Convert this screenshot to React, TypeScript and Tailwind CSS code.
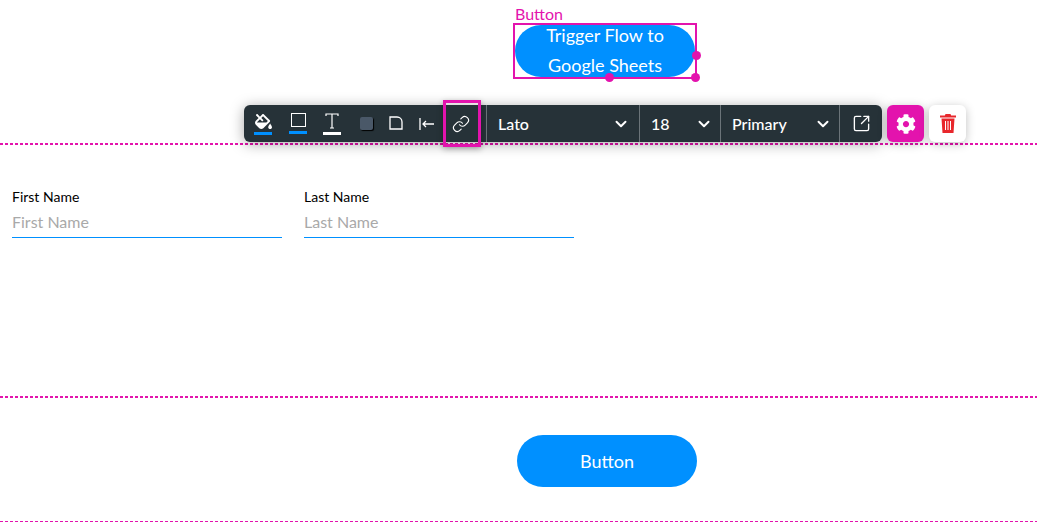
import { useState } from "react";
import { ChevronDown, Link as LinkIcon, SquareArrowOutUpRight } from "lucide-react";
import { FaCog, FaFillDrip } from "react-icons/fa";

function Dashed({ thick }: { thick?: boolean }) {
  return (
    <div
      className={
        thick
          ? "h-[2px] bg-[repeating-linear-gradient(90deg,#e313ad_0_3px,transparent_3px_5px)]"
          : "h-px bg-[repeating-linear-gradient(90deg,#e313ad_0_3px,transparent_3px_5px)]"
      }
    />
  );
}

function Field({ label }: { label: string }) {
  const [value, setValue] = useState("");
  return (
    <label className="block w-[270px]">
      <span className="block text-[14px] leading-[16px] text-black">{label}</span>
      <input
        value={value}
        onChange={(e) => setValue(e.target.value)}
        placeholder={label}
        className="mt-[7px] block h-[26px] w-full border-b border-[#0090ff] pb-[7px] text-[16px] outline-none placeholder:text-[#a9a9a9]"
      />
    </label>
  );
}

function Select({ label, width, textWidth }: { label: string; width: string; textWidth: string }) {
  return (
    <div className={`flex h-full items-center border-l border-[#6b7479] pl-[11px] ${width}`}>
      <span className={`text-[16px] font-medium text-white ${textWidth}`}>{label}</span>
      <ChevronDown className="h-[18px] w-[18px] text-white" strokeWidth={2.6} />
    </div>
  );
}

function Toolbar() {
  return (
    <div className="absolute left-[244px] top-[105px] flex h-[37px] items-center gap-[5px]">
      <div className="flex h-full w-[638px] items-center rounded-[6px] bg-[#263238] shadow-[0_2px_14px_rgba(0,0,0,0.35)]">
        <div className="flex h-full w-[242px] items-center pl-[2px]">
          <div className="flex w-[34px] flex-col items-center">
            <FaFillDrip className="h-[17px] w-[17px] text-white" />
            <div className="mt-[2px] h-[3px] w-[18px] bg-[#0090ff]" />
          </div>
          <div className="ml-px flex w-[34px] flex-col items-center">
            <div className="h-[14px] w-[15px] border border-white" />
            <div className="mt-[4px] h-[3px] w-[18px] bg-[#0090ff]" />
          </div>
          <div className="flex w-[34px] flex-col items-center">
            <svg viewBox="0 0 14 16" className="h-[16px] w-[14px]" fill="none" stroke="white" strokeWidth="1.2">
              <path d="M1 3V1h12v2M7 1v14M5 15h4" />
            </svg>
            <div className="mt-[3px] h-[3px] w-[18px] bg-white" />
          </div>
          <div className="ml-[2px] flex w-[30px] justify-center">
            <div className="h-[13px] w-[13px] rounded-[2px] bg-[#4a5868] shadow-[1px_1px_1px_#000]" />
          </div>
          <div className="flex w-[30px] justify-center pb-[2px]">
            <svg viewBox="0 0 14 14" className="h-[14px] w-[14px]" fill="none" stroke="white" strokeWidth="1.3">
              <path d="M1 1h7c2.800 0 5 2.200 5 5v7H1z" />
            </svg>
          </div>
          <div className="flex w-[32px] justify-center">
            <svg viewBox="0 0 16 12" className="h-[12px] w-[16px]" fill="none" stroke="white" strokeWidth="1.3">
              <path d="M1 0v12M15 6H4M7 3L4 6l3 3" />
            </svg>
          </div>
          <div className="flex w-[36px] justify-center">
            <LinkIcon className="h-[18px] w-[18px] text-white" strokeWidth={1.5} />
          </div>
        </div>
        <Select label="Lato" width="w-[153px]" textWidth="w-[114px]" />
        <Select label="18" width="w-[81px]" textWidth="w-[44px]" />
        <Select label="Primary" width="w-[119px]" textWidth="w-[82px]" />
        <div className="flex h-full flex-1 items-center justify-center border-l border-[#6b7479]">
          <SquareArrowOutUpRight className="h-[19px] w-[19px] text-white" strokeWidth={1.7} />
        </div>
      </div>
      <div className="flex h-full w-[37px] items-center justify-center rounded-[6px] bg-[#e313ad] shadow-[0_2px_10px_rgba(0,0,0,0.25)]">
        <FaCog className="h-[20px] w-[20px] text-white" />
      </div>
      <div className="flex h-full w-[37px] items-center justify-center rounded-[6px] bg-white shadow-[0_2px_10px_rgba(0,0,0,0.25)]">
        <svg viewBox="0 0 16 19" className="h-[19px] w-[16px]" fill="#e8272c">
          <path d="M5.500 0h5l.6 1.500H16v2H0v-2h4.900zM1.500 4.500h13L13.500 19h-11zM5 7v9h1V7zm2.500 0v9h1V7zM10 7v9h1V7z" fillRule="evenodd" />
        </svg>
      </div>
      {/* selected link button highlight */}
      <div className="absolute left-[199px] top-[-5px] h-[47px] w-[38px] border-[3px] border-[#e313ad] shadow-[0_2px_6px_rgba(0,0,0,0.3)]" />
    </div>
  );
}

export default function App() {
  return (
    <div className="relative h-[530px] w-[1037px] overflow-hidden bg-white font-['Lato',sans-serif]">
      <div className="h-[143px] pl-[515px] pt-[25px]">
        <button className="h-[52px] w-[180px] rounded-[26px] bg-[#0090ff] px-[20px] text-[18px] leading-[30px] text-white">
          <span className="relative top-[-5px] block">
            Trigger Flow to
            <br />
            Google Sheets
          </span>
        </button>
      </div>
      <Dashed thick />

      <div className="flex h-[251px] items-start gap-[22px] pl-[12px] pt-[44px]">
        <Field label="First Name" />
        <Field label="Last Name" />
      </div>
      <Dashed thick />

      <div className="h-[123px] pl-[517px] pt-[37px]">
        <button className="h-[52px] w-[180px] rounded-[26px] bg-[#0090ff] text-[18px] text-white">Button</button>
      </div>
      <Dashed />

      {/* selection overlay on the top button */}
      <span className="absolute left-[515px] top-[5px] text-[16px] leading-[18px] text-[#e313ad]">Button</span>
      <div className="absolute left-[513px] top-[23px] h-[56px] w-[184px] border-2 border-[#e313ad]" />
      <div className="absolute left-[692px] top-[51px] h-[9px] w-[9px] rounded-full bg-[#e313ad]" />
      <div className="absolute left-[691px] top-[73px] h-[9px] w-[9px] rounded-full bg-[#e313ad]" />
      <div className="absolute left-[605px] top-[73px] h-[9px] w-[9px] rounded-full bg-[#e313ad]" />

      <Toolbar />
    </div>
  );
}
